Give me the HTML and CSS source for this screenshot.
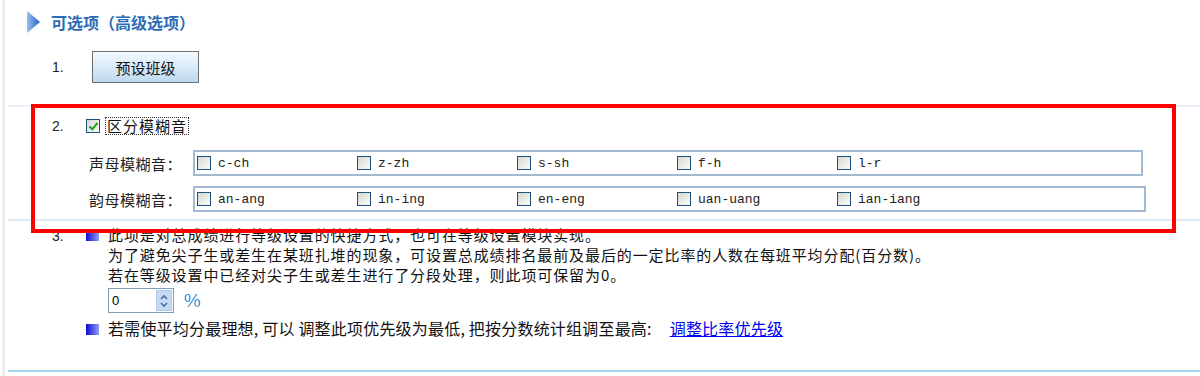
FILE: index.html
```html
<!DOCTYPE html>
<html lang="zh">
<head>
  <meta charset="UTF-8" />
  <title>可选项</title>
  <link rel="stylesheet" href="styles.css">
</head>
<body>
  <div class="page">
    <!-- 标题 -->
    <div class="head">
      <svg class="arrow" width="13" height="22" viewBox="0 0 13 22">
        <defs>
          <linearGradient id="ag" x1="0" y1="0" x2="1" y2="0">
            <stop offset="0" stop-color="#9cc0ee"/>
            <stop offset="1" stop-color="#1f5fc4"/>
          </linearGradient>
        </defs>
        <polygon points="0,0 13,11 0,22" fill="url(#ag)"/>
      </svg>
      <span class="title">可选项（高级选项）</span>
    </div>

    <!-- 1 -->
    <div class="item item-1">
      <span class="num">1.</span>
      <button class="btn">预设班级</button>
    </div>
    <div class="divider"></div>

    <!-- 2 -->
    <div class="item-2">
      <div class="item-head">
        <span class="num">2.</span>
        <label class="main-check">
          <input type="checkbox" class="cb" checked>
          <span class="focus">区分模糊音</span>
        </label>
      </div>
      <div class="fuzzy-row">
        <span class="fuzzy-label">声母模糊音：</span>
        <div class="fuzzy-box">
          <label class="opt"><input type="checkbox" class="cb">c-ch</label>
          <label class="opt"><input type="checkbox" class="cb">z-zh</label>
          <label class="opt"><input type="checkbox" class="cb">s-sh</label>
          <label class="opt"><input type="checkbox" class="cb">f-h</label>
          <label class="opt"><input type="checkbox" class="cb">l-r</label>
        </div>
      </div>
      <div class="fuzzy-row">
        <span class="fuzzy-label">韵母模糊音：</span>
        <div class="fuzzy-box wide">
          <label class="opt"><input type="checkbox" class="cb">an-ang</label>
          <label class="opt"><input type="checkbox" class="cb">in-ing</label>
          <label class="opt"><input type="checkbox" class="cb">en-eng</label>
          <label class="opt"><input type="checkbox" class="cb">uan-uang</label>
          <label class="opt"><input type="checkbox" class="cb">ian-iang</label>
        </div>
      </div>
    </div>
    <div class="divider light"></div>

    <!-- 3 -->
    <div class="item-3">
      <span class="num">3.</span>
      <span class="bullet"></span>
      <div class="desc">
        <p>此项是对总成绩进行等级设置的快捷方式，也可在等级设置模块实现。</p>
        <p>为了避免尖子生或差生在某班扎堆的现象，可设置总成绩排名最前及最后的一定比率的人数在每班平均分配(百分数)。</p>
        <p>若在等级设置中已经对尖子生或差生进行了分段处理，则此项可保留为0。</p>
        <div class="rate">
          <div class="spin">
            <input type="text" value="0">
            <span class="spin-btn">
              <svg width="10" height="16" viewBox="0 0 10 16">
                <polyline points="2,6 5,3 8,6" fill="none" stroke="#4a6fa0" stroke-width="1.6"/>
                <polyline points="2,10 5,13 8,10" fill="none" stroke="#4a6fa0" stroke-width="1.6"/>
              </svg>
            </span>
          </div>
          <span class="pct">%</span>
        </div>
      </div>
      <span></span>
      <span class="bullet"></span>
      <p class="tip">若需使平均分最理想, 可以 调整此项优先级为最低, 把按分数统计组调至最高:<a href="#" class="link">调整比率优先级</a></p>
    </div>
    <div class="bottom-line"></div>

    <!-- 标注框 -->
    <div class="mark-box"></div>
  </div>
</body>
</html>
```

FILE: styles.css
```css
body {
  margin: 0;
  font-family: "Noto Sans CJK SC", "Liberation Sans", sans-serif;
  color: #111;
  background: #fff;
}

.page {
  position: relative;
  margin-left: 2px;
  border-left: 3px solid #efedeb;
  padding-left: 3px;
  min-height: 376px;
  box-sizing: border-box;
}

.head {
  height: 44px;
  display: flex;
  align-items: center;
  padding-left: 19px;
  gap: 11px;
}

.title {
  font-size: 16px;
  font-weight: bold;
  color: #2d6cb4;
}

.num {
  font-family: "Liberation Sans", sans-serif;
  font-size: 14px;
  color: #222;
}

.item-1 {
  height: 61px;
  display: flex;
  align-items: flex-start;
  padding: 7px 0 0 44px;
  box-sizing: border-box;
}

.item-1 .num {
  width: 40px;
  line-height: 32px;
}

.btn {
  width: 107px;
  height: 32px;
  border: 1px solid #6f6f6f;
  background: linear-gradient(#f4f9fd, #d9eaf7 50%, #bcd9ef);
  font-family: "Noto Sans CJK SC", sans-serif;
  font-size: 15px;
  color: #111;
  padding: 0;
}

.divider {
  height: 2px;
  background: #e9f0f8;
}

.divider.light {
  background: #dfeaf6;
}

.item-2 {
  padding: 9px 0 7px 44px;
}

.item-head {
  display: flex;
  align-items: center;
  height: 20px;
}

.item-head .num {
  width: 34px;
}

.main-check {
  display: flex;
  align-items: center;
  gap: 6px;
}

.focus {
  font-size: 15px;
  letter-spacing: 1px;
  outline: 1px dotted #333;
  line-height: 16px;
  padding: 0 1px;
}

.cb {
  appearance: none;
  -webkit-appearance: none;
  margin: 0;
  width: 14px;
  height: 14px;
  border: 1px solid #1c5180;
  background: linear-gradient(135deg, #d8d8d2, #fbfbf8);
  position: relative;
  flex: none;
}

.cb:checked::after {
  content: "";
  position: absolute;
  left: 4px;
  top: 1px;
  width: 3px;
  height: 7px;
  border-right: 2px solid #21a121;
  border-bottom: 2px solid #21a121;
  transform: rotate(40deg);
}

.fuzzy-row {
  display: flex;
  align-items: center;
  margin-top: 14px;
  padding-left: 37px;
}

.fuzzy-row + .fuzzy-row {
  margin-top: 10px;
}

.fuzzy-label {
  width: 104px;
  font-size: 15px;
  letter-spacing: 0.5px;
  color: #222;
}

.fuzzy-box {
  width: 950px;
  height: 26px;
  box-sizing: border-box;
  border: 2px solid #a3b9d2;
  display: flex;
  align-items: center;
  padding-left: 2px;
}

.fuzzy-box.wide {
  width: 953px;
}

.opt {
  width: 160px;
  display: flex;
  align-items: center;
  gap: 7px;
  font-family: "Liberation Mono", monospace;
  font-size: 13px;
  color: #222;
}

.item-3 {
  display: grid;
  grid-template-columns: 34px 22px 1fr;
  padding: 4px 0 0 44px;
  align-items: start;
}

.item-3 .num {
  line-height: 20px;
  margin-top: 1px;
}

.bullet {
  width: 13px;
  height: 11px;
  margin-top: 5px;
  background: linear-gradient(90deg, #0a0ad8, #8f9ff5);
}

.desc p {
  margin: 0;
  font-size: 15px;
  line-height: 20px;
  letter-spacing: 0.9px;
  color: #111;
}

.rate {
  display: flex;
  align-items: center;
  margin-top: 3px;
  height: 25px;
}

.spin {
  width: 66px;
  height: 25px;
  box-sizing: border-box;
  border: 1px solid #7f9db9;
  display: flex;
  align-items: center;
  padding: 1px;
}

.spin input {
  width: 44px;
  border: none;
  outline: none;
  font-family: "Liberation Sans", sans-serif;
  font-size: 13px;
  padding: 0 0 0 2px;
  background: transparent;
}

.spin-btn {
  width: 16px;
  height: 21px;
  background: #c5d8f4;
  border: 1px solid #b0c8ec;
  box-sizing: border-box;
  display: flex;
  align-items: center;
  justify-content: center;
}

.pct {
  margin-left: 10px;
  font-family: "Liberation Sans", sans-serif;
  font-size: 19px;
  background: linear-gradient(#2f8fe0 60%, #f0a030);
  -webkit-background-clip: text;
  background-clip: text;
  color: transparent;
}

.item-3 .bullet:last-of-type {
  margin-top: 11px;
}

.tip {
  margin: 5px 0 0;
  font-size: 16px;
  line-height: 20px;
  letter-spacing: 0.2px;
  color: #111;
}

.link {
  margin-left: 18px;
  color: #0000ee;
  text-decoration: underline;
}

.bottom-line {
  height: 2px;
  margin-top: 32px;
  background: #a6d4f5;
}

.mark-box {
  position: absolute;
  left: 26px;
  top: 104px;
  width: 1145px;
  height: 129px;
  box-sizing: border-box;
  border: 4px solid #ff0000;
}
```
